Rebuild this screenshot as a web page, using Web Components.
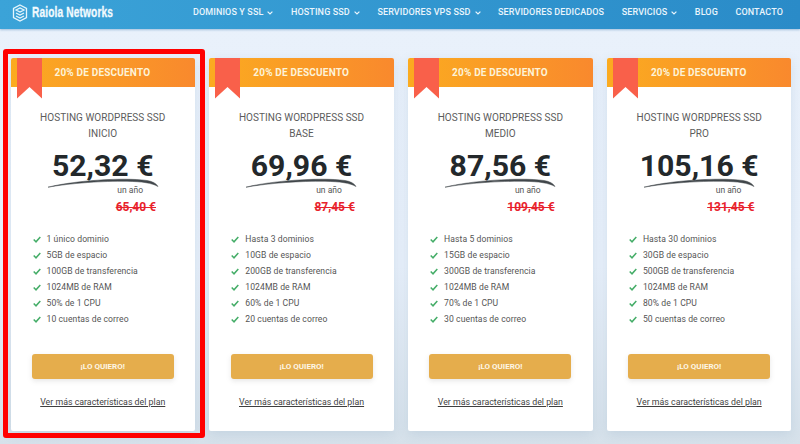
<!DOCTYPE html>
<html lang="es"><head><meta charset="utf-8"><title>Raiola Networks</title>
<style>
html,body{margin:0;height:444px;overflow:hidden}
body{font-family:Roboto,"Liberation Sans",sans-serif;background:linear-gradient(180deg,#e9f1fb 0,#e8f0fa 60%,#d6e1ea 100%);position:relative}
</style></head><body>
<template id="t-nav"><style>
:host{display:flex;align-items:center;height:29px;box-sizing:border-box;padding:0 17px 4px 12px;background:linear-gradient(90deg,#3ba3d8,#2a8bc8);box-shadow:0 1px 2px rgba(30,100,160,.35);color:#eaf5fc}
.logo{display:flex;align-items:center;gap:4px;margin-right:auto}
.name{display:block;width:81px;font:700 14.5px/1 "Liberation Sans",sans-serif;color:#f2fafe;white-space:nowrap;transform:scaleX(.7);transform-origin:0 50%;-webkit-text-stroke:.3px #f2fafe;letter-spacing:.2px}
nav{display:flex;gap:17.5px;font:500 9px/1 Roboto,sans-serif;letter-spacing:.12px}
</style><div class="logo"><svg width="16" height="18" viewBox="0 0 16 18" fill="none" stroke="#e6f5fc" stroke-width="1.3"><path d="M8 1l6.500 3.500v9L8 17l-6.500-3.500v-9z"/><path d="M4 6l4-2 4 2-4 2zM4 9l4 2 4-2M4 12l4 2 4-2" stroke-width="1.200"/></svg><span class="name">Raiola Networks</span></div><nav><slot></slot></nav></template>

<template id="t-link"><style>
:host{display:inline-flex;align-items:center;gap:4px;white-space:nowrap}
svg{display:none}:host([menu]) svg{display:block}
</style><slot></slot><svg width="6" height="4" viewBox="0 0 6 4" fill="none" stroke="currentColor" stroke-width="1.200"><path d="M.6.6L3 3l2.400-2.400"/></svg></template>

<template id="t-plans"><style>
:host{display:grid;grid-template-columns:repeat(4,184.5px);column-gap:14.3px;padding:29px 0 0 10.5px}
</style><slot></slot></template>

<template id="t-card"><style>
:host{display:flex;flex-direction:column;position:relative;height:373px;background:#fff;border-radius:2px;box-shadow:0 3px 12px rgba(90,130,170,.16);color:#555;text-align:center}
.head{height:29px;display:flex;align-items:center;padding-left:44px;background:linear-gradient(90deg,#fbab20,#f9892d);border-radius:2px 2px 0 0;font:700 10px/1 Roboto,sans-serif;letter-spacing:.18px;color:#fdf3d8}
.rib{position:absolute;left:6px;top:0}
.title{margin-top:23px;font:400 10px/16px Roboto,sans-serif;letter-spacing:.04px;color:#5c5c5c}
.price{margin-top:9px;font:700 30.2px/30px Roboto,sans-serif;color:#23282b;white-space:nowrap}
.swoosh{display:block;margin:-3px auto 0 36px}
.per{margin-top:-3px;align-self:flex-end;margin-right:var(--r,53px);font:400 8.5px/10px Roboto,sans-serif;color:#555}
.old{margin-top:6px;align-self:flex-end;margin-right:var(--o,39px);font:700 12px/12px Roboto,sans-serif;color:#e8222c;text-decoration:line-through}
ul{list-style:none;margin:18px 0 0;padding:0 0 0 22px;text-align:left;font:400 8.6px/16px Roboto,sans-serif;letter-spacing:.08px;color:#555}
li{display:flex;align-items:center;gap:6px}
.btn{margin:27px auto 0;width:142px;height:25px;box-sizing:border-box;display:flex;align-items:center;justify-content:center;background:#e5ad4c;border-radius:3px;box-shadow:0 2px 5px rgba(120,120,120,.18);color:#fdf6e6;font:700 8px/1 Roboto,sans-serif}
.more{margin-top:17px;font:400 8.8px/12px Roboto,sans-serif;color:#3f3f3f;text-decoration:underline}
</style>
<div class="head"><slot name="discount"></slot></div>
<svg class="rib" width="25" height="41" viewBox="0 0 25 41"><path d="M0 0h25v40.500L12.500 29 0 40.500z" fill="#f9604a"/></svg>
<div class="title"><slot name="title"></slot></div>
<div class="price"><slot name="price"></slot></div>
<svg class="swoosh" width="112" height="10" viewBox="0 0 112 10" fill="none"><path d="M1 9.200C25 3 75-1 100 2.500c5 .8 9 2.500 11 6C105 5 95 3.600 80 3.300 55 3 25 5 1 9.200z" fill="#40464a" stroke="#40464a" stroke-width=".5"/></svg>
<div class="per"><slot name="per"></slot></div>
<div class="old"><slot name="old"></slot></div>
<ul id="list"></ul>
<div class="btn"><slot name="cta"></slot></div>
<div class="more"><slot name="more"></slot></div></template>

<template id="t-frame"><style>
:host{display:block;position:absolute;left:3px;top:49px;width:202px;height:389px;box-sizing:border-box;border:5px solid #f00;border-radius:3px;pointer-events:none}
</style></template>

<r-nav>
<r-link menu>DOMINIOS Y SSL</r-link><r-link menu>HOSTING SSD</r-link><r-link menu>SERVIDORES VPS SSD</r-link><r-link>SERVIDORES DEDICADOS</r-link><r-link menu>SERVICIOS</r-link><r-link>BLOG</r-link><r-link>CONTACTO</r-link>
</r-nav>
<r-plans id="plans"></r-plans>
<r-frame></r-frame>
<script>
function tpl(n,id,setup){customElements.define(n,class extends HTMLElement{constructor(){super();const s=this.attachShadow({mode:'open'});s.appendChild(document.getElementById(id).content.cloneNode(true));}connectedCallback(){if(setup)setup(this)}})}
tpl('r-nav','t-nav');tpl('r-link','t-link');tpl('r-plans','t-plans');tpl('r-frame','t-frame');
tpl('r-card','t-card',el=>{
  const ul=el.shadowRoot.getElementById('list');
  (el.dataset.items||'').split('|').forEach(t=>{
    const li=document.createElement('li');
    li.innerHTML='<svg width="8" height="7" viewBox="0 0 8 7" fill="none" stroke="#45ad68" stroke-width="1.500"><path d="M.7 3.500l2.300 2.300L7.300 1"/></svg>';
    li.appendChild(document.createTextNode(t));ul.appendChild(li);
  });
});
const plans=[
 ['INICIO','52,32 €','65,40 €',['1 único dominio','5GB de espacio','100GB de transferencia','1024MB de RAM','50% de 1 CPU','10 cuentas de correo'],52,39],
 ['BASE','69,96 €','87,45 €',['Hasta 3 dominios','10GB de espacio','200GB de transferencia','1024MB de RAM','60% de 1 CPU','20 cuentas de correo'],52,39],
 ['MEDIO','87,56 €','109,45 €',['Hasta 5 dominios','15GB de espacio','300GB de transferencia','1024MB de RAM','70% de 1 CPU','30 cuentas de correo'],52,38],
 ['PRO','105,16 €','131,45 €',['Hasta 30 dominios','30GB de espacio','500GB de transferencia','1024MB de RAM','80% de 1 CPU','50 cuentas de correo'],50,37]];
const host=document.getElementById('plans');
plans.forEach(p=>{
 const c=document.createElement('r-card');
 c.dataset.items=p[3].join('|');
 c.style.setProperty('--r',p[4]+'px');c.style.setProperty('--o',p[5]+'px');
 c.innerHTML='<span slot="discount">20% DE DESCUENTO</span><span slot="title">HOSTING WORDPRESS SSD<br>'+p[0]+'</span><span slot="price">'+p[1]+'</span><span slot="per">un año</span><span slot="old">'+p[2]+'</span><span slot="cta">¡LO QUIERO!</span><span slot="more">Ver más características del plan</span>';
 host.appendChild(c);
});
</script>
</body></html>
